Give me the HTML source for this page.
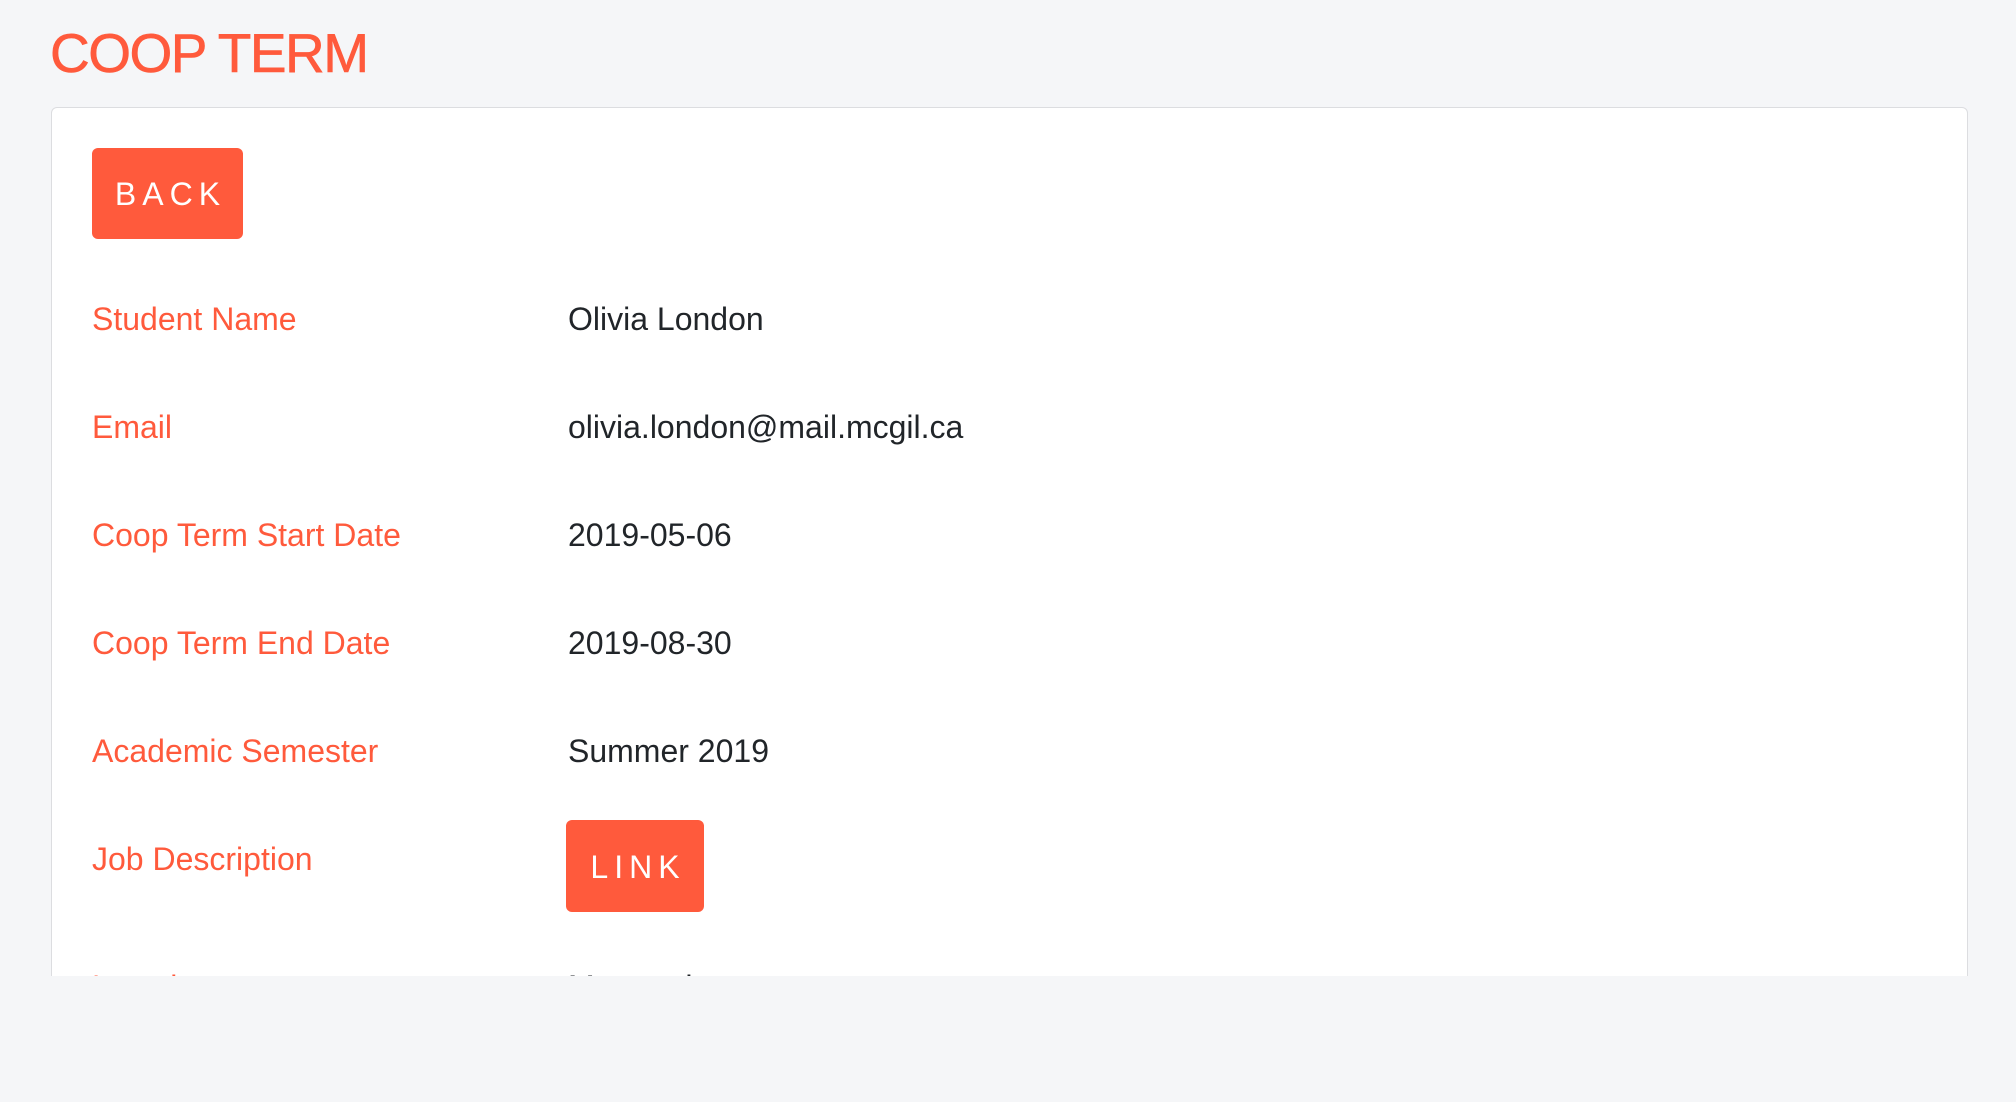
<!DOCTYPE html>
<html><head><meta charset="utf-8"><style>
html,body{margin:0;padding:0;}
body{width:2016px;height:1102px;background:#f5f6f8;position:relative;overflow:hidden;font-family:"Liberation Sans",Arial,sans-serif;}
.title{position:absolute;left:50px;top:20px;font-size:55px;line-height:66px;color:#ff5a3c;letter-spacing:-1.5px;-webkit-text-stroke:0.6px #ff5a3c;}
.card{position:absolute;left:51px;top:107px;width:1915px;height:920px;background:#fff;border:1.5px solid #dcdde0;border-radius:6px;}
.clip{position:absolute;left:0;top:976px;width:2016px;height:126px;background:#f5f6f8;}
.btn{position:absolute;background:#ff5a3c;color:#fff;border-radius:6px;font-size:32px;letter-spacing:6px;display:flex;align-items:center;justify-content:center;box-sizing:border-box;padding-left:6px;padding-top:2px;}
.l{position:absolute;left:92px;font-size:32px;line-height:40px;color:#ff5a3c;}
.v{position:absolute;left:568px;font-size:32px;line-height:40px;color:#212529;}
</style></head><body>
<div class="title">COOP TERM</div>
<div class="card"></div>
<div class="btn" style="left:92px;top:148px;width:151px;height:91px;">BACK</div>
<div class="l" style="top:299px">Student Name</div><div class="v" style="top:299px">Olivia London</div>
<div class="l" style="top:407px">Email</div><div class="v" style="top:407px">olivia.london@mail.mcgil.ca</div>
<div class="l" style="top:515px">Coop Term Start Date</div><div class="v" style="top:515px">2019-05-06</div>
<div class="l" style="top:623px">Coop Term End Date</div><div class="v" style="top:623px">2019-08-30</div>
<div class="l" style="top:731px">Academic Semester</div><div class="v" style="top:731px">Summer 2019</div>
<div class="l" style="top:839px">Job Description</div>
<div class="btn" style="left:566px;top:820px;width:138px;height:92px;">LINK</div>
<div class="l" style="top:967px">Location</div><div class="v" style="top:967px">Montreal</div>
<div class="clip"></div>
</body></html>
